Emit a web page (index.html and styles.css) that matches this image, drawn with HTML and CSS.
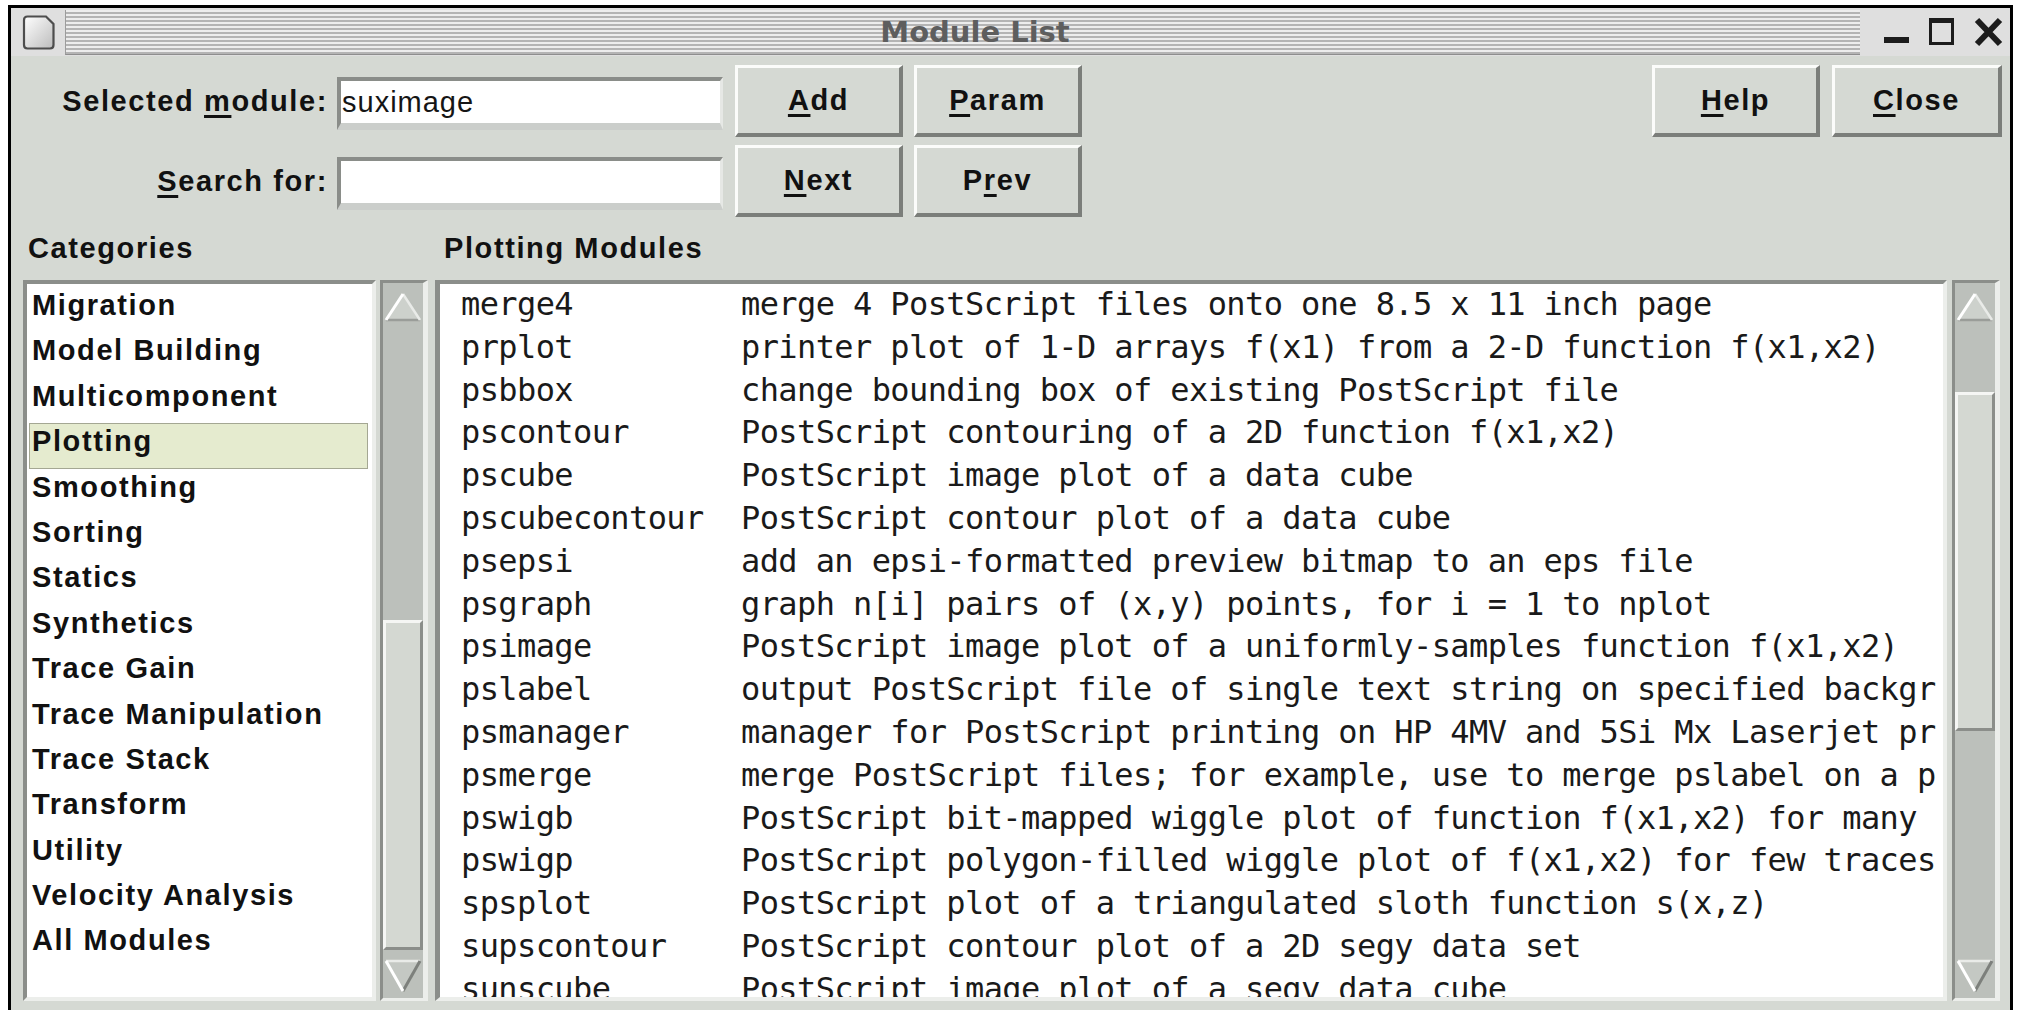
FILE: index.html
```html
<!DOCTYPE html>
<html lang="en">
<head>
<meta charset="utf-8">
<title>Module List</title>
<link rel="stylesheet" href="styles.css">
</head>
<body>
<div class="window">
  <div class="titlebar">
    <svg class="ticon" viewBox="0 0 33 35" width="33" height="35">
      <defs>
        <linearGradient id="iconfill" x1="0" y1="0" x2="1" y2="1">
          <stop offset="0" stop-color="#ffffff"/>
          <stop offset="1" stop-color="#bcbcbc"/>
        </linearGradient>
      </defs>
      <path d="M2,5 Q2,1.5 5.5,1.5 H24 L31.5,9 V30 Q31.5,33.5 28,33.5 H5.5 Q2,33.5 2,30 Z" fill="url(#iconfill)" stroke="#4d4d4d" stroke-width="2.2"/>
    </svg>
    <div class="stripes"><span class="title">Module List</span></div>
    <svg class="wctl" viewBox="0 0 150 48" width="150" height="48">
      <rect x="24" y="29" width="25" height="6" fill="#1c1c1c"/>
      <rect x="70.5" y="11.5" width="22" height="24" fill="none" stroke="#1c1c1c" stroke-width="3"/>
      <rect x="69" y="10" width="25" height="5" fill="#1c1c1c"/>
      <path d="M117,12 L140,36 M140,12 L117,36" stroke="#1c1c1c" stroke-width="6"/>
    </svg>
  </div>

  <div class="content">
    <div class="toprow">
      <div class="form">
        <div class="frow">
          <label class="lbl">Selected <u>m</u>odule:</label>
          <div class="entry">suximage</div>
          <div class="btn first"><span><u>A</u>dd</span></div>
          <div class="btn second"><span><u>P</u>aram</span></div>
        </div>
        <div class="frow">
          <label class="lbl"><u>S</u>earch for:</label>
          <div class="entry"></div>
          <div class="btn first"><span><u>N</u>ext</span></div>
          <div class="btn second"><span>P<u>r</u>ev</span></div>
        </div>
      </div>
      <div class="rbtns">
        <div class="btn help"><span><u>H</u>elp</span></div>
        <div class="btn close"><span><u>C</u>lose</span></div>
      </div>
    </div>

    <div class="heads">
      <div class="hcat">Categories</div>
      <div class="hmod">Plotting Modules</div>
    </div>

    <div class="panes">
      <div class="catlist">
        <div class="cat">Migration</div>
        <div class="cat">Model Building</div>
        <div class="cat">Multicomponent</div>
        <div class="cat sel">Plotting</div>
        <div class="cat">Smoothing</div>
        <div class="cat">Sorting</div>
        <div class="cat">Statics</div>
        <div class="cat">Synthetics</div>
        <div class="cat">Trace Gain</div>
        <div class="cat">Trace Manipulation</div>
        <div class="cat">Trace Stack</div>
        <div class="cat">Transform</div>
        <div class="cat">Utility</div>
        <div class="cat">Velocity Analysis</div>
        <div class="cat">All Modules</div>
      </div>

      <div class="sb catsb">
        <svg class="arr" viewBox="0 0 40 39" width="40" height="39">
          <polygon points="20,11 37,37 3,37" fill="#cdd1cc"/>
          <path d="M37,37 H3" stroke="#9a9d99" stroke-width="2.5"/>
          <path d="M20,11 L37,37" stroke="#e9ebe8" stroke-width="2.5"/>
          <path d="M3,37 L20,11" stroke="#ffffff" stroke-width="3"/>
        </svg>
        <div class="thumb" style="margin-top:298px;height:330px"></div>
        <svg class="arr dn" viewBox="0 0 40 40" width="40" height="40">
          <polygon points="3,3 37,3 20,33" fill="#c4c8c3"/>
          <path d="M3,3 H37" stroke="#e9ebe8" stroke-width="2.5"/>
          <path d="M37,3 L20,33" stroke="#7d807c" stroke-width="3"/>
          <path d="M3,3 L20,33" stroke="#ffffff" stroke-width="3"/>
        </svg>
      </div>

      <div class="modlist">
        <div class="mrow"><span class="mname">merge4</span><span>merge 4 PostScript files onto one 8.5 x 11 inch page</span></div>
        <div class="mrow"><span class="mname">prplot</span><span>printer plot of 1-D arrays f(x1) from a 2-D function f(x1,x2)</span></div>
        <div class="mrow"><span class="mname">psbbox</span><span>change bounding box of existing PostScript file</span></div>
        <div class="mrow"><span class="mname">pscontour</span><span>PostScript contouring of a 2D function f(x1,x2)</span></div>
        <div class="mrow"><span class="mname">pscube</span><span>PostScript image plot of a data cube</span></div>
        <div class="mrow"><span class="mname">pscubecontour</span><span>PostScript contour plot of a data cube</span></div>
        <div class="mrow"><span class="mname">psepsi</span><span>add an epsi-formatted preview bitmap to an eps file</span></div>
        <div class="mrow"><span class="mname">psgraph</span><span>graph n[i] pairs of (x,y) points, for i = 1 to nplot</span></div>
        <div class="mrow"><span class="mname">psimage</span><span>PostScript image plot of a uniformly-samples function f(x1,x2)</span></div>
        <div class="mrow"><span class="mname">pslabel</span><span>output PostScript file of single text string on specified backgr</span></div>
        <div class="mrow"><span class="mname">psmanager</span><span>manager for PostScript printing on HP 4MV and 5Si Mx Laserjet pr</span></div>
        <div class="mrow"><span class="mname">psmerge</span><span>merge PostScript files; for example, use to merge pslabel on a p</span></div>
        <div class="mrow"><span class="mname">pswigb</span><span>PostScript bit-mapped wiggle plot of function f(x1,x2) for many</span></div>
        <div class="mrow"><span class="mname">pswigp</span><span>PostScript polygon-filled wiggle plot of f(x1,x2) for few traces</span></div>
        <div class="mrow"><span class="mname">spsplot</span><span>PostScript plot of a triangulated sloth function s(x,z)</span></div>
        <div class="mrow"><span class="mname">supscontour</span><span>PostScript contour plot of a 2D segy data set</span></div>
        <div class="mrow"><span class="mname">sunscube</span><span>PostScript image plot of a segy data cube</span></div>
      </div>

      <div class="sb modsb">
        <svg class="arr" viewBox="0 0 40 39" width="40" height="39">
          <polygon points="20,11 37,37 3,37" fill="#cdd1cc"/>
          <path d="M37,37 H3" stroke="#9a9d99" stroke-width="2.5"/>
          <path d="M20,11 L37,37" stroke="#e9ebe8" stroke-width="2.5"/>
          <path d="M3,37 L20,11" stroke="#ffffff" stroke-width="3"/>
        </svg>
        <div class="thumb" style="margin-top:70px;height:339px"></div>
        <svg class="arr dn" viewBox="0 0 40 40" width="40" height="40">
          <polygon points="3,3 37,3 20,33" fill="#c4c8c3"/>
          <path d="M3,3 H37" stroke="#e9ebe8" stroke-width="2.5"/>
          <path d="M37,3 L20,33" stroke="#7d807c" stroke-width="3"/>
          <path d="M3,3 L20,33" stroke="#ffffff" stroke-width="3"/>
        </svg>
      </div>
    </div>
  </div>
</div>
</body>
</html>
```

FILE: styles.css
```css
* {
  box-sizing: border-box;
}

html,
body {
  margin: 0;
  padding: 0;
  background: #ffffff;
  overflow: hidden;
}

body {
  width: 2017px;
  height: 1010px;
}

/* window frame */
.window {
  margin: 5px 0 0 8px;
  width: 2005px;
  height: 1005px;
  border: 3px solid #000000;
  border-bottom: 0;
  background: #d5d9d3;
  display: flex;
  flex-direction: column;
  font-family: "Liberation Sans", Arial, sans-serif;
  color: #111111;
}

/* title bar */
.titlebar {
  flex: none;
  height: 48px;
  display: flex;
  background: #dfdfdf;
}

.ticon {
  flex: none;
  display: block;
  width: 33px;
  height: 35px;
  margin: 7px 10px 0 11px;
}

.stripes {
  flex: 1;
  height: 45px;
  margin-top: 2px;
  background: repeating-linear-gradient(180deg, #ededed 0 2px, #b4b4b4 2px 4px);
  border-left: 1px solid #9c9c9c;
  border-bottom: 1px solid #8e8e8e;
  display: flex;
  align-items: center;
  justify-content: center;
  padding-left: 24px;
}

.title {
  font-family: "DejaVu Sans", "Liberation Sans", sans-serif;
  font-weight: bold;
  font-size: 29px;
  color: #5e5e5e;
  line-height: 40px;
}

.wctl {
  flex: none;
  display: block;
  width: 150px;
  height: 48px;
}

/* dialog content */
.content {
  flex: 1;
  padding: 9px 8px 0 12px;
  display: flex;
  flex-direction: column;
}

.toprow {
  display: flex;
  justify-content: space-between;
  align-items: flex-start;
}

.form {
  display: flex;
  flex-direction: column;
  gap: 8px;
}

.frow {
  display: flex;
  align-items: center;
  height: 72px;
}

.lbl {
  flex: none;
  width: 305px;
  text-align: right;
  font-weight: bold;
  font-size: 29px;
  letter-spacing: 1.6px;
  white-space: nowrap;
}

u {
  text-decoration-thickness: 3px;
  text-underline-offset: 4px;
}

.entry {
  flex: none;
  width: 386px;
  height: 53px;
  margin: 5px 0 0 9px;
  background: #ffffff;
  border-style: solid;
  border-width: 4px 3px 7px 4px;
  border-color: #8a8d89 #e6e8e5 #cbcecb #8a8d89;
  padding-left: 1px;
  font-size: 29px;
  line-height: 42px;
  letter-spacing: 1px;
  color: #151515;
  white-space: nowrap;
  overflow: hidden;
}

.btn {
  flex: none;
  width: 168px;
  height: 72px;
  display: flex;
  align-items: center;
  justify-content: center;
  background: #d5d9d3;
  border-style: solid;
  border-width: 3px 4px 4px 3px;
  border-color: #fbfcfa #7b7e7a #7b7e7a #fbfcfa;
  font-weight: bold;
  font-size: 29px;
  letter-spacing: 1.6px;
  white-space: nowrap;
}

.btn.first {
  margin-left: 12px;
}

.btn.second {
  margin-left: 11px;
}

.rbtns {
  display: flex;
  gap: 12px;
}

.btn.close {
  width: 170px;
}

/* pane headings */
.heads {
  flex: none;
  display: flex;
  margin-top: 14px;
  height: 34px;
  line-height: 34px;
  font-weight: bold;
  font-size: 29px;
  letter-spacing: 1.6px;
  white-space: nowrap;
}

.hcat {
  width: 412px;
  padding-left: 5px;
}

.hmod {
  padding-left: 9px;
}

/* lists */
.panes {
  flex: none;
  display: flex;
  margin-top: 15px;
  height: 721px;
}

.catlist,
.modlist {
  flex: none;
  height: 721px;
  background: #ffffff;
  border-style: solid;
  border-color: #8b8e8a #eceeeb #eceeeb #8b8e8a;
  overflow: hidden;
}

.catlist {
  width: 353px;
  border-width: 4px;
  padding-top: 3px;
  margin-right: 4px;
}

.cat {
  height: 45.4px;
  line-height: 36px;
  padding-left: 5px;
  font-weight: bold;
  font-size: 29px;
  letter-spacing: 1.6px;
  white-space: nowrap;
}

.cat.sel {
  margin: 0 4px 0 2px;
  padding-left: 2px;
  line-height: 34px;
  background: #e5ebcf;
  border: 1px solid #a4a793;
}

.modlist {
  width: 1512px;
  border-width: 4px 4px 4px 5px;
  margin-right: 5px;
  font-family: "DejaVu Sans Mono", "Liberation Mono", monospace;
  font-size: 32px;
  letter-spacing: -0.6px;
  color: #1a1a1a;
}

.mrow {
  display: flex;
  height: 42.8px;
  line-height: 40px;
  padding-left: 21px;
  white-space: pre;
}

.mname {
  flex: none;
  width: 280px;
}

/* scrollbars */
.sb {
  flex: none;
  width: 48px;
  height: 721px;
  display: flex;
  flex-direction: column;
  background: #bcc0bb;
  border-style: solid;
  border-width: 3px 5px 3px 3px;
  border-color: #8b8e8a #eceeeb #eceeeb #8b8e8a;
}

.catsb {
  margin-right: 7px;
}

.arr {
  flex: none;
  display: block;
  width: 40px;
  height: 39px;
}

.arr.dn {
  margin-top: auto;
  height: 40px;
}

.thumb {
  flex: none;
  background: #d4d8d2;
  border-style: solid;
  border-width: 3px;
  border-color: #f5f6f4 #8b8e8a #8b8e8a #f5f6f4;
}
```
